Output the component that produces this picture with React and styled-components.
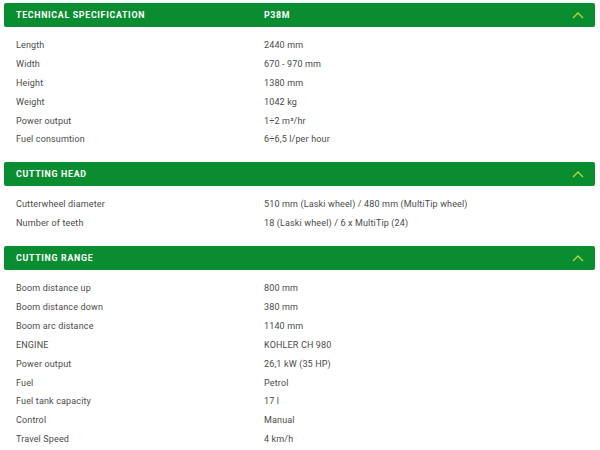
import React from 'react';
import styled, { createGlobalStyle } from 'styled-components';

const GlobalStyle = createGlobalStyle`
  html, body {
    margin: 0;
    padding: 0;
    background: #ffffff;
  }
  body {
    font-family: Roboto, "Liberation Sans", sans-serif;
  }
`;

const Page = styled.div`
  width: 600px;
  padding: 3px 5px 0 4px;
  box-sizing: border-box;
`;

const Header = styled.div`
  display: grid;
  grid-template-columns: 248px 1fr 34px;
  align-items: center;
  height: 24px;
  padding-left: 12px;
  background: #0a8d31;
  border-radius: 2px;
  color: #ffffff;
  font-weight: 700;
  font-size: 8.8px;
  letter-spacing: 0.7px;
  text-transform: uppercase;
`;

const Chevron = styled.span`
  display: flex;
  justify-content: center;
  align-items: center;
`;

const Body = styled.div`
  padding: 8.5px 0 13.5px 12px;
`;

const Row = styled.div`
  display: grid;
  grid-template-columns: 248px 1fr;
  align-items: center;
  height: 18.9px;
  font-size: 9px;
  color: #4a4a4a;
  letter-spacing: 0.15px;
`;

const sections = [
  {
    title: 'Technical specification',
    model: 'P38M',
    rows: [
      ['Length', '2440 mm'],
      ['Width', '670 - 970 mm'],
      ['Height', '1380 mm'],
      ['Weight', '1042 kg'],
      ['Power output', '1÷2 m³/hr'],
      ['Fuel consumtion', '6÷6,5 l/per hour'],
    ],
  },
  {
    title: 'Cutting head',
    rows: [
      ['Cutterwheel diameter', '510 mm (Laski wheel) / 480 mm (MultiTip wheel)'],
      ['Number of teeth', '18 (Laski wheel) / 6 x MultiTip (24)'],
    ],
  },
  {
    title: 'Cutting range',
    rows: [
      ['Boom distance up', '800 mm'],
      ['Boom distance down', '380 mm'],
      ['Boom arc distance', '1140 mm'],
      ['ENGINE', 'KOHLER CH 980'],
      ['Power output', '26,1 kW (35 HP)'],
      ['Fuel', 'Petrol'],
      ['Fuel tank capacity', '17 l'],
      ['Control', 'Manual'],
      ['Travel Speed', '4 km/h'],
    ],
  },
];

function ChevronUp() {
  return (
    <svg width="12" height="8" viewBox="0 0 12 8">
      <path d="M1 7 L6 2 L11 7" fill="none" stroke="#b5d83a" strokeWidth="1.4" />
    </svg>
  );
}

export default function App() {
  return (
    <Page>
      <GlobalStyle />
      {sections.map((s) => (
        <section key={s.title}>
          <Header>
            <span>{s.title}</span>
            <span>{s.model || ''}</span>
            <Chevron>
              <ChevronUp />
            </Chevron>
          </Header>
          <Body>
            {s.rows.map(([label, value]) => (
              <Row key={label + value}>
                <span>{label}</span>
                <span>{value}</span>
              </Row>
            ))}
          </Body>
        </section>
      ))}
    </Page>
  );
}
